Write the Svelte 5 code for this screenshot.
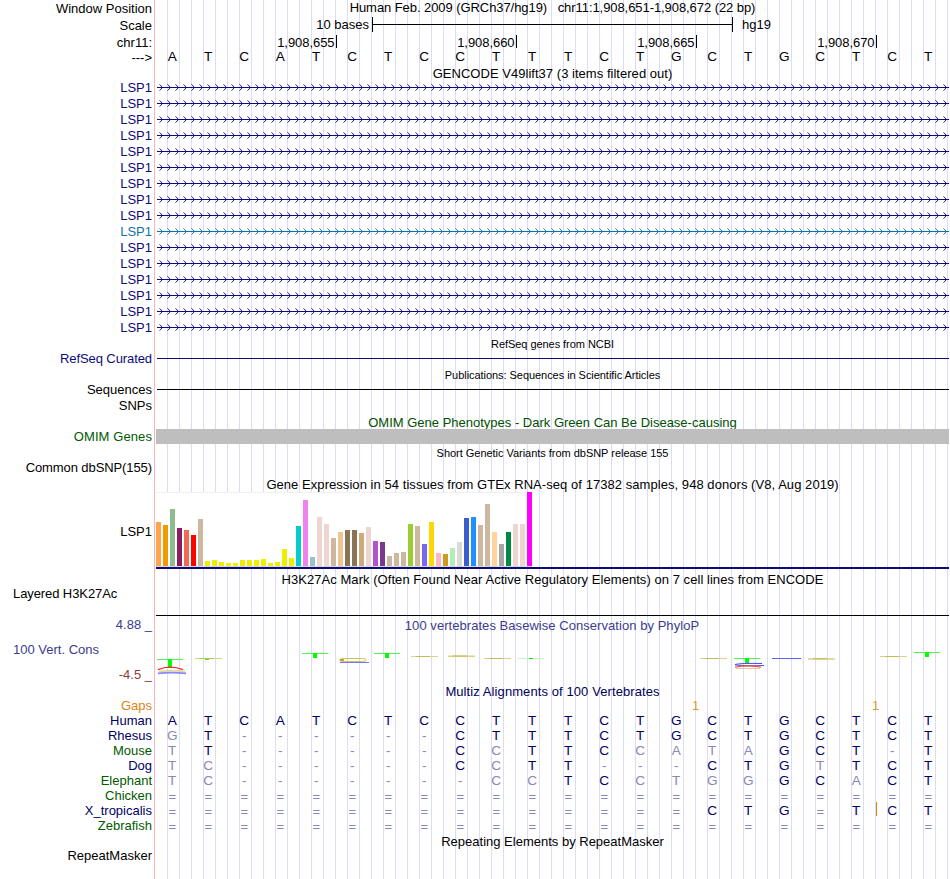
<script lang="ts">
  type Species = { name: string; color: string; bases: string; insertAt?: number };

  const human = 'ATCATCTCCTTTCTGCTGCTCT';
  const positions = ['1,908,655', '1,908,660', '1,908,665', '1,908,670'];
  const transcripts = Array.from({ length: 16 }, (_, i) => ({ name: 'LSP1', alt: i === 9 }));

  const species: Species[] = [
    { name: 'Human', color: 'navy', bases: human },
    { name: 'Rhesus', color: 'navy', bases: 'GT------CTTTCTGCTGCTCT' },
    { name: 'Mouse', color: 'green', bases: 'TT------CCTTCCATAGCT-T' },
    { name: 'Dog', color: 'navy', bases: 'TC------CCTT---CTGTTCT' },
    { name: 'Elephant', color: 'green', bases: 'TC-------CCTCCTGGGCACT' },
    { name: 'Chicken', color: 'green', bases: '======================' },
    { name: 'X_tropicalis', color: 'navy', bases: '===============CTG=TCT', insertAt: 20 },
    { name: 'Zebrafish', color: 'green', bases: '======================' }
  ];

  // [bar height, tissue color]
  const tissues: [number, string][] = [
    [44, '#ffa54f'], [41, '#ee9a00'], [57, '#8fbc8f'], [38, '#8b1c62'], [36, '#ee6a50'], [31, '#ff0000'],
    [47, '#cdb79e'], [5, '#eeee00'], [6, '#eeee00'], [4, '#eeee00'], [3, '#eeee00'], [3, '#eeee00'],
    [6, '#eeee00'], [6, '#eeee00'], [6, '#eeee00'], [7, '#eeee00'], [3, '#eeee00'], [4, '#eeee00'],
    [17, '#eeee00'], [8, '#eeee00'], [40, '#00cdcd'], [66, '#ee82ee'], [9, '#9ac0cd'], [49, '#eed5d2'],
    [42, '#eed5d2'], [28, '#cdb79e'], [34, '#eec591'], [36, '#8b7355'], [36, '#8b7355'], [33, '#cdaa7d'],
    [39, '#eed5d2'], [25, '#b452cd'], [24, '#7a378b'], [10, '#cdb79e'], [13, '#cdb79e'], [14, '#cdb79e'],
    [42, '#9acd32'], [40, '#cdb79e'], [22, '#7a67ee'], [44, '#ffd700'], [13, '#ffb6c1'], [12, '#cd9b1d'],
    [18, '#b4eeb4'], [24, '#d9d9d9'], [48, '#3a5fcd'], [49, '#1e90ff'], [41, '#cdb79e'], [62, '#cdb79e'],
    [34, '#ffd39b'], [22, '#a6a6a6'], [34, '#008b45'], [42, '#eed5d2'], [42, '#eed5d2'], [74, '#ff00ff']
  ];

  const arrows = Array.from({ length: 99 }, (_, i) => `M${i * 8 + 2.6} 4.4l2.9 3.1l-2.9 3.1`).join('');

  // conservation logo, x from the left edge of the track
  const tees = [
    { x: 1, y: 27, stem: 9 },
    { x: 146, y: 21, stem: 5 },
    { x: 218, y: 21, stem: 5 },
    { x: 578, y: 26, stem: 5 },
    { x: 758, y: 20, stem: 5 }
  ];
  const strokes = [
    { x: 39, y: 26, h: 1 },
    { x: 255, y: 24, h: 1 },
    { x: 292, y: 23.5, h: 1.6 },
    { x: 328, y: 26, h: 1 },
    { x: 544, y: 26, h: 1 },
    { x: 652, y: 26.2, h: 1.6 },
    { x: 724, y: 24, h: 1 }
  ];
</script>

{#snippet bases(text: string, insertAt: number | undefined = undefined)}
  <div class="bases">
    {#each text as base, i}
      <span class:diff={base !== human[i]} class:unaligned={base === '='}>
        {#if insertAt === i}<i class="insert"></i>{/if}{base}
      </span>
    {/each}
  </div>
{/snippet}

<main class="browser">
  <div class="row window">
    <div class="label">Window Position</div>
    <h1>Human Feb. 2009 (GRCh37/hg19) &nbsp; chr11:1,908,651-1,908,672 (22 bp)</h1>
  </div>
  <div class="row scale">
    <div class="label">Scale</div>
    <div class="scale-track">
      <span class="from">10 bases</span>
      <div class="scale-bar"></div>
      <span class="to">hg19</span>
    </div>
  </div>
  <div class="row ruler">
    <div class="label">chr11:</div>
    <div class="positions">
      {#each positions as position}
        <span>{position}</span>
      {/each}
    </div>
  </div>
  <div class="row sequence">
    <div class="label">---&gt;</div>
    {@render bases(human)}
  </div>

  <h2 class="gencode">GENCODE V49lift37 (3 items filtered out)</h2>
  {#each transcripts as transcript}
    <div class="row gene" class:alt={transcript.alt}>
      <div class="label">{transcript.name}</div>
      <svg class="intron" width="792" height="15" viewBox="0 0 792 15">
        <path d={arrows} fill="none" stroke="currentColor" stroke-width="0.95" />
        <rect y="7" width="792" height="1" fill="currentColor" />
      </svg>
    </div>
  {/each}

  <h2 class="small">RefSeq genes from NCBI</h2>
  <div class="row gene">
    <div class="label tight">RefSeq Curated</div>
    <div class="line"></div>
  </div>

  <h2 class="small">Publications: Sequences in Scientific Articles</h2>
  <div class="row">
    <div class="label">Sequences</div>
    <div class="line"></div>
  </div>
  <div class="row">
    <div class="label">SNPs</div>
  </div>

  <h2 class="omim">OMIM Gene Phenotypes - Dark Green Can Be Disease-causing</h2>
  <div class="row">
    <div class="label wide green">OMIM Genes</div>
    <div class="block"></div>
  </div>

  <h2 class="small dbsnp">Short Genetic Variants from dbSNP release 155</h2>
  <div class="row">
    <div class="label tight">Common dbSNP(155)</div>
  </div>

  <h2 class="gtex-title">Gene Expression in 54 tissues from GTEx RNA-seq of 17382 samples, 948 donors (V8, Aug 2019)</h2>
  <div class="row gtex">
    <div class="label">LSP1</div>
    <div class="gtex-track">
      <div class="chart">
        {#each tissues as [height, color]}
          <div class="bar" style="height: {height}px; background: {color}"></div>
        {/each}
      </div>
    </div>
  </div>

  <h2 class="h3k-title">H3K27Ac Mark (Often Found Near Active Regulatory Elements) on 7 cell lines from ENCODE</h2>
  <div class="row h3k">
    <div class="label left tight">Layered H3K27Ac</div>
    <div class="baseline"></div>
  </div>

  <div class="row phylop">
    <div class="axis">
      <div class="label">4.88 _</div>
      <div class="label left">100 Vert. Cons</div>
      <div class="label negative">-4.5 _</div>
    </div>
    <div>
      <h2>100 vertebrates Basewise Conservation by PhyloP</h2>
      <svg class="logo" width="793" height="50" viewBox="0 0 793 50">
        {#each strokes as s}
          <rect x={s.x} y={s.y} width="27" height={s.h} fill="#d8d28c" />
          <rect x={s.x + 5} y={s.y} width="14" height="1" fill="#c4bc50" />
        {/each}
        {#each tees as t}
          <rect x={t.x} y={t.y} width="26" height="1" fill="#50f650" />
          <rect x={t.x + 11} y={t.y} width="4" height={t.stem} fill="#00ff00" />
        {/each}
        <rect x="49" y="27" width="4" height="1" fill="#40ee20" />
        <rect x="362" y="26" width="26" height="1" fill="#c4f6c4" />
        <rect x="373" y="26" width="4" height="1" fill="#00ee00" />
        <rect x="616" y="26" width="29" height="1" fill="#6060ff" />
        <g fill="none">
          <path d="M2 37.6q12-5 25 0" stroke="#ff2020" stroke-width="1.2" />
          <path d="M3 39.6q12-2 26 0" stroke="#ddd8a0" stroke-width="1.8" />
          <path d="M2 41.4q13-1.5 28 0" stroke="#8888ff" stroke-width="1.6" />
          <rect x="183.5" y="26.5" width="27" height="3" rx="5" stroke="#c8c060" />
          <path d="M184 28h4" stroke="#a89a10" stroke-width="1.6" />
          <path d="M184 30.5h29" stroke="#7878ff" />
          <path d="M579 32.5q5-1.5 27-1m-27 1.4q12 1.4 29 0.6" stroke="#4848f8" />
          <path d="M579 35.2q13-2.6 26 0" stroke="#ff4040" stroke-width="1.1" />
          <path d="M580 36.5h24" stroke="#ddcf98" />
        </g>
      </svg>
    </div>
  </div>

  <h2 class="multiz-title">Multiz Alignments of 100 Vertebrates</h2>
  <div class="row align">
    <div class="label orange">Gaps</div>
    <div class="bases gaps">
      {#each human as _, i}
        <span>{i === 15 || i === 20 ? '1' : ''}</span>
      {/each}
    </div>
  </div>
  {#each species as s}
    <div class="row align">
      <div class="label {s.color}">{s.name}</div>
      {@render bases(s.bases, s.insertAt)}
    </div>
  {/each}

  <h2 class="repeat-title">Repeating Elements by RepeatMasker</h2>
  <div class="row">
    <div class="label">RepeatMasker</div>
  </div>
</main>

<style>
  :global(body) {
    margin: 0;
    background: #fff;
  }

  .browser {
    width: 949px;
    height: 879px;
    overflow: hidden;
    font: 13px/15px 'Liberation Sans', Arial, sans-serif;
    color: #000;
    background:
      linear-gradient(#ffb4b4, #ffb4b4) 154px 0 / 1px 100% no-repeat,
      repeating-linear-gradient(90deg, #dcdcf8 0 1px, transparent 1px 12px) 167px 0 / 782px 100% no-repeat;
  }

  h1,
  h2 {
    margin: 0;
    height: 15px;
    font-size: 13px;
    font-weight: normal;
    text-align: center;
    white-space: nowrap;
  }

  h1 {
    letter-spacing: -0.07px;
  }

  h2 {
    margin-left: 156px;
  }

  .row {
    display: grid;
    grid-template-columns: 152px 793px;
    column-gap: 4px;
    height: 16px;
  }

  .label {
    text-align: right;
    white-space: nowrap;
  }

  .label.left {
    padding-left: 13px;
    text-align: left;
  }

  .label.tight {
    letter-spacing: -0.09px;
  }

  .label.wide {
    letter-spacing: 0.09px;
  }

  .window {
    height: 17px;
  }

  .window .label,
  .scale .label,
  .ruler .label,
  .sequence .label {
    padding-top: 1px;
  }

  .scale {
    height: 17px;
  }

  .scale-track {
    display: flex;
  }

  .from {
    width: 213px;
    margin-right: 3px;
    text-align: right;
  }

  .scale-bar {
    width: 359px;
    height: 15px;
    border: solid #000;
    border-width: 0 1px;
    background: linear-gradient(#000, #000) 0 7px / 100% 1px no-repeat;
  }

  .to {
    margin-left: 9px;
  }

  .ruler {
    height: 15px;
  }

  .positions {
    display: flex;
    padding: 1px 0 0 1px;
  }

  .positions span {
    box-sizing: border-box;
    width: 180px;
    height: 13px;
    padding-right: 1.5px;
    border-right: 1px solid #000;
    text-align: right;
    letter-spacing: -0.06px;
  }

  .bases {
    display: grid;
    grid-template-columns: repeat(22, 36px);
    margin-left: -1.8px;
    font-size: 13.6px;
    text-align: center;
  }

  .bases span {
    position: relative;
  }

  .bases .unaligned {
    top: 1px;
    font-size: 13px;
  }

  .gene {
    color: #0c0c78;
  }

  .gene.alt {
    color: #1070aa;
  }

  .intron {
    display: block;
    margin-left: 1px;
  }

  .line {
    height: 1px;
    margin: 7px 0 0 1px;
    background: currentColor;
  }

  .gencode {
    padding-top: 1px;
    height: 14px;
    letter-spacing: 0.03px;
  }

  .small {
    padding-top: 1px;
    height: 14px;
    font-size: 11px;
    line-height: 14px;
    letter-spacing: -0.05px;
  }

  .small.dbsnp {
    letter-spacing: -0.03px;
  }

  .omim {
    padding-top: 1px;
    height: 14px;
    color: #005000;
  }

  .block {
    height: 15px;
    background: #bebebe;
  }

  .gtex-title {
    padding-top: 1px;
    letter-spacing: 0.055px;
  }

  .gtex {
    height: 79px;
  }

  .gtex .label {
    padding-top: 32px;
  }

  .gtex-track {
    height: 75px;
    border-bottom: 2px solid #0c0c78;
  }

  .chart {
    display: flex;
    align-items: flex-end;
    gap: 2px;
    width: 376px;
    height: 74px;
    border-bottom: 1px solid #d8d8d8;
    background: #fff linear-gradient(#f0f0f0, #f0f0f0) 0 0 / 100% 1px no-repeat;
  }

  .bar {
    flex: 0 0 5px;
  }

  .h3k-title {
    padding-top: 1px;
    height: 14px;
    letter-spacing: 0.05px;
  }

  .h3k {
    height: 30px;
  }

  .baseline {
    height: 1px;
    margin-top: 29px;
    background: #000;
  }

  .phylop {
    height: 67px;
    padding-top: 1px;
    color: #3c3c8c;
  }

  .phylop h2 {
    margin: 1px 0 0;
    padding-right: 1px;
    letter-spacing: 0.05px;
  }

  .axis {
    display: flex;
    flex-direction: column;
    gap: 10px;
  }

  .negative {
    color: #8c3c3c;
  }

  .logo {
    display: block;
    margin-top: -1px;
  }

  .multiz-title {
    height: 14px;
    color: #00005a;
    letter-spacing: 0.09px;
  }

  .align {
    height: 15px;
    color: #000064;
  }

  .align .diff {
    color: #8888b4;
  }

  .gaps {
    color: #e69632;
    font-size: 13px;
  }

  .gaps span {
    margin-left: -33px;
  }

  .insert {
    position: absolute;
    top: -1px;
    left: 1.8px;
    width: 1px;
    height: 14px;
    background: #e08214;
  }

  .navy {
    color: #000064;
  }

  .green {
    color: #005a00;
  }

  .orange {
    color: #e08214;
  }

  .repeat-title {
    padding-top: 1px;
    height: 14px;
  }
</style>
